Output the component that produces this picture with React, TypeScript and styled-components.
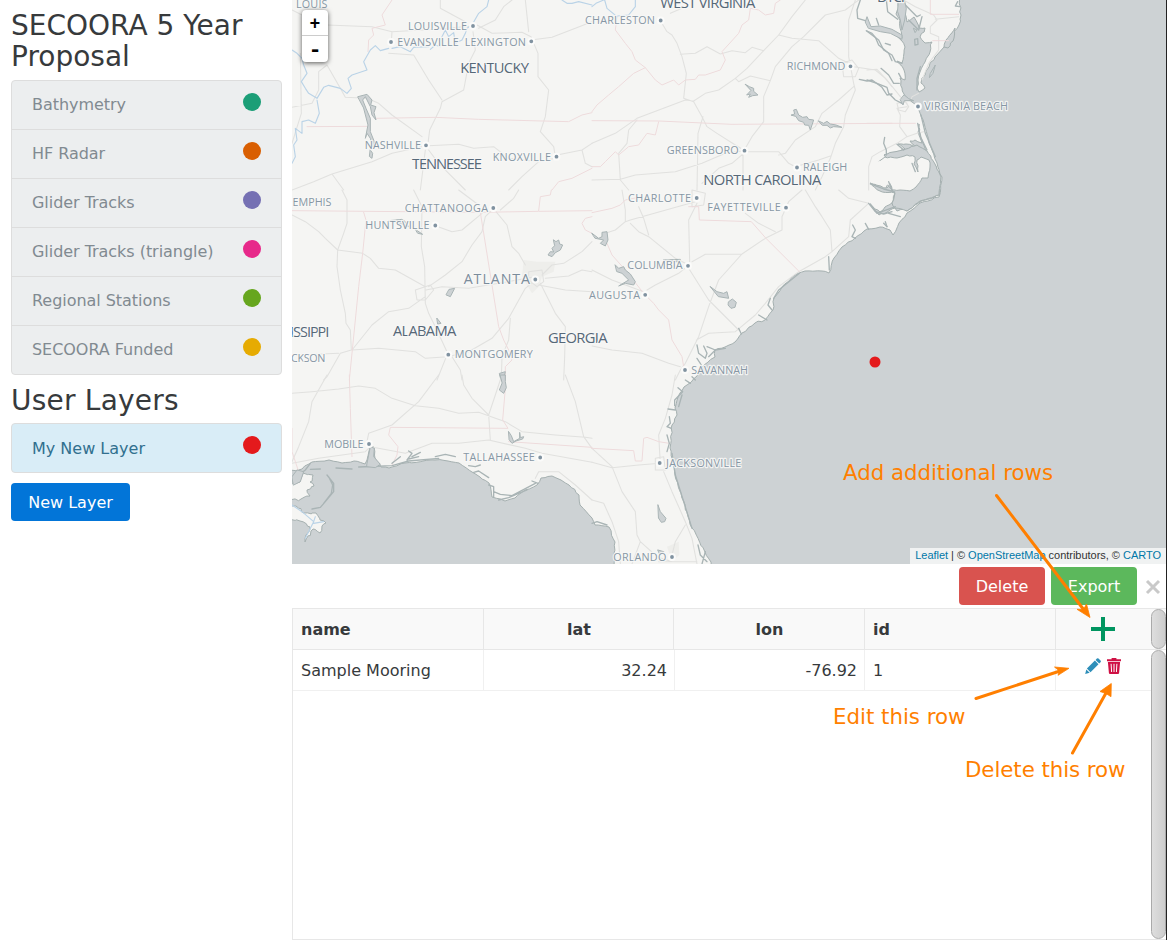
import React from 'react';
import styled, { createGlobalStyle } from 'styled-components';

const GlobalStyle = createGlobalStyle`
  * { box-sizing: border-box; }
  body { margin: 0; background: #fff; color: #373a3c; font: 16px/24px "DejaVu Sans", sans-serif; }
`;

const Page = styled.div`
  position: relative;
  display: flex;
  width: 1167px;
  height: 940px;
  overflow: hidden;
  border-right: 1px solid #222;
`;
const Sidebar = styled.aside`
  width: 292px;
  flex: none;
  padding: 11px 10px 0 11px;
`;
const Heading = styled.h3<{ $gap: number; $tracking?: number }>`
  margin: 0 0 ${(p) => p.$gap}px;
  font-size: 28px;
  font-weight: 400;
  line-height: 30.8px;
  letter-spacing: ${(p) => p.$tracking || 0}px;
`;
const LayerList = styled.ul<{ $gap: number }>`
  list-style: none;
  margin: 0 0 ${(p) => p.$gap}px;
  padding: 0;
`;
const Swatch = styled.span<{ $color: string }>`
  width: 18px;
  height: 18px;
  border-radius: 50%;
  background: ${(p) => p.$color};
`;
const LayerItem = styled.li<{ $active?: boolean }>`
  display: flex;
  justify-content: space-between;
  padding: ${(p) => (p.$active ? '13px 20px 11px' : '12px 20px')};
  margin-bottom: -1px;
  border: 1px solid #ddd;
  background: ${(p) => (p.$active ? '#d9edf7' : '#eceeef')};
  color: ${(p) => (p.$active ? '#31708f' : '#818a91')};
  letter-spacing: ${(p) => (p.$active ? '0' : '-0.04px')};
  &:first-child { border-radius: 4px 4px 0 0; }
  &:last-child { border-radius: 0 0 4px 4px; margin-bottom: 0; }
  &:only-child { border-radius: 4px; }
  ${Swatch} { margin-top: ${(p) => (p.$active ? '-1px' : '0')}; }
`;
const Button = styled.button<{ $color: string; $width: number }>`
  width: ${(p) => p.$width}px;
  height: 38px;
  padding: 1px 0 0;
  border: 0;
  border-radius: 4px;
  background: ${(p) => p.$color};
  color: #fff;
  font: inherit;
`;
const Main = styled.main`
  flex: 1;
  min-width: 0;
  display: flex;
  flex-direction: column;
`;
const MapPane = styled.section`
  position: relative;
  height: 564px;
  flex: none;
  overflow: hidden;
  background: #cdd2d4;
`;
const ZoomControl = styled.div`
  position: absolute;
  left: 10px;
  top: 10px;
  width: 26px;
  border-radius: 4px;
  background: #fff;
  box-shadow: 0 1px 5px rgba(0, 0, 0, 0.65);
`;
const ZoomButton = styled.div`
  height: 26px;
  text-align: center;
  color: #000;
  font: bold 18px/28px "Liberation Mono", monospace;
  & + & { font-size: 22px; line-height: 30px; }
  &:first-child { border-bottom: 1px solid #ccc; }
`;
const Attribution = styled.div`
  position: absolute;
  right: 0;
  bottom: 0;
  height: 16px;
  padding: 0 5px;
  background: rgba(255, 255, 255, 0.7);
  color: #333;
  white-space: nowrap;
  letter-spacing: -0.02px;
  font: 11px/15px "Liberation Sans", Arial, sans-serif;
  span { color: #0078a8; }
`;
const Toolbar = styled.div`
  display: flex;
  justify-content: flex-end;
  align-items: center;
  gap: 6px;
  height: 44px;
  padding: 0 5px 0 0;
`;
const CloseIcon = styled.svg`
  width: 16px;
  height: 16px;
  margin: 2px 0 0 2px;
`;
const Grid = styled.div`
  flex: 1;
  border: 1px solid #e7e7e7;
  border-right: 0;
  display: flex;
  flex-direction: column;
`;
const GridSection = styled.div<{ $head?: boolean }>`
  display: flex;
  height: ${(p) => (p.$head ? '41px' : 'auto')};
  flex: ${(p) => (p.$head ? 'none' : '1')};
  background: ${(p) => (p.$head ? '#f9f9f9' : '#fff')};
  border-bottom: ${(p) => (p.$head ? '1px solid #e7e7e7' : '0')};
`;
const GridRow = styled.div<{ $cols: string; $line?: string }>`
  display: grid;
  flex: 1;
  height: ${(p) => (p.$line ? '41px' : '40px')};
  grid-template-columns: ${(p) => p.$cols};
  border-bottom: ${(p) => (p.$line ? '1px solid ' + p.$line : '0')};
`;
const Cell = styled.div<{ $align?: string; $head?: boolean }>`
  padding: 9px ${(p) => (p.$align ? 7 : 8)}px 7px 8px;
  text-align: ${(p) => p.$align || 'left'};
  font-weight: ${(p) => (p.$head ? 700 : 400)};
  border-right: 1px solid ${(p) => (p.$head ? '#e7e7e7' : '#f0f0f0')};
`;
const ActionCell = styled.div`
  display: flex;
  justify-content: center;
  gap: 6px;
  padding: 8px 1px 0 0;
`;
const Scrollbar = styled.div`
  width: 15px;
  border: 1px solid #aaa;
  border-radius: 8px;
  background: linear-gradient(90deg, #dedede, #cdcdcd);
`;
const Annotations = styled.svg`
  position: absolute;
  left: 0;
  top: 0;
  pointer-events: none;
`;
const MapDrawing = styled.svg`
  display: block;
  .land { fill: #f5f5f3; stroke: #a5b0b0; stroke-width: 1; stroke-linejoin: round; }
  .sound { fill: #cdd2d4; stroke: #a5b0b0; stroke-width: 1; stroke-linejoin: round; }
`;

const layers: [string, string][] = [
  ['Bathymetry', '#1b9e77'],
  ['HF Radar', '#d95f02'],
  ['Glider Tracks', '#7570b3'],
  ['Glider Tracks (triangle)', '#e7298a'],
  ['Regional Stations', '#66a61e'],
  ['SECOORA Funded', '#e6ab02'],
];

/* Breaks every segment into short steps with a small, repeatable offset. */
function rough(points: string, amp = 1, step = 4, close = true): string {
  const pts = points.trim().split(/\s+/).map((p) => p.split(',').map(Number));
  let seed = 7;
  const rnd = () => {
    seed = (seed * 16807) % 2147483647;
    return seed / 2147483647 - 0.5;
  };
  let d = `M${pts[0][0]} ${pts[0][1]}`;
  for (let i = 1; i < pts.length; i++) {
    const [ax, ay] = pts[i - 1];
    const [bx, by] = pts[i];
    const n = Math.max(1, Math.round(Math.hypot(bx - ax, by - ay) / step));
    for (let k = 1; k <= n; k++) {
      const o = k === n ? 0 : amp;
      d += `L${(ax + ((bx - ax) * k) / n + rnd() * 2 * o).toFixed(1)} ${(ay + ((by - ay) * k) / n + rnd() * 2 * o).toFixed(1)}`;
    }
  }
  return d + (close ? 'Z' : '');
}

const mainland =
  '280,-10 896,-10 899,8 896,14 900,20 900,28 902,38 897,36 902,41 905,47 904,53 902,63 897,61 904,70 905,80 900,78 902,88 905,98 912,102 918,106 920,113 924,123 929,143 937,163 942,177 939,197 920,203 907,213 899,223 893,235 890,230 880,227 867,229 855,238 842,247 834,258 829,273 822,271 805,271 792,277 782,287 774,298 773,310 765,320 755,323 742,333 735,342 725,347 715,350 715,357 704,365 697,376 684,387 677,400 675,408 677,415 672,425 670,448 675,475 682,498 692,528 705,552 711,562 713,574 614,574 615,542 609,527 595,525 592,518 580,505 579,495 569,485 561,480 552,476 541,478 537,485 525,490 515,498 505,501 492,497 489,483 480,477 472,472 459,463 448,461 435,460 405,463 389,468 381,467 375,458 374,447 370,447 367,460 365,464 354,461 342,463 329,460 312,462 302,469 280,472';
const delmarva =
  '903,-5 905,13 907,22 914,17 919,28 925,28 920,37 925,43 932,42 930,52 925,62 920,72 918,80 917,88 919,92 925,88 921,83 922,78 929,67 935,57 944,47 950,38 959,25 961,15 960,-5';
const sounds = [
  '884,155 897,157 908,154 915,156 914,165 918,172 917,158 929,157 930,167 928,178 922,178 916,187 910,191 900,190 892,190 889,183 887,188 870,183 880,191 895,193 892,203 885,207 880,212 870,205 879,215 895,208 897,211 904,209 907,211 920,202 939,195 940,180 935,165 932,163 927,152 921,138 919,124 918,132 922,143 915,140 910,141 916,147 906,144 898,144 905,149 893,153',
  '944,47 946,40 955,28 954,38 948,48',
  '884,155 893,152 906,149 917,145 927,151 935,164 941,177 939,195 920,201 907,211 895,208 892,203 895,193 888,186 888,160',
];
/* Land between the Albemarle and Pamlico sounds. */
const peninsula =
  '885,157 897,158 907,155 915,157 914,164 918,172 917,160 921,157 929,160 930,167 928,178 922,178 916,187 910,191 900,190 892,190 889,182 886,188 872,184 874,165';
const louisiana = [
  '280,484 300,482 303,473 313,475 310,482 314,486 307,490 310,496 301,499 280,502',
  '280,502 296,506 304,513 316,513 320,520 326,523 322,526 320,533 313,529 305,542 306,535 310,527 300,521 280,515',
];

interface Tile { x: number; y: number; roads: string; borders: string; rivers?: string; lakes?: string; inlets?: string; urban?: string }
/* Each tile is drawn at three units to the pixel. */
const tiles: Tile[] = [
  {
    x: 292, y: 0,
    roads: 'M105 75L240 80L300 95L430 88L543 78M543 95L550 150L530 190L515 270L450 305L445 325L413 390L408 430M290 160L365 165L410 240L450 300M555 75L600 100L690 97L717 110L738 160L738 230L770 270L760 350L745 395L785 440L790 470M717 120L780 112L850 85L900 65M445 0L445 25L520 65M560 85L610 60L635 20L660 0M700 0L710 95M105 195L145 265L160 292L225 295L260 310L300 345L390 410M390 440L300 460L240 485L120 522L65 545L0 570M120 522L155 570M410 437L500 433L545 445L605 440L650 475L740 485L690 530L650 570M400 450L385 570M410 450L440 490L520 570M0 322L60 310L80 270L80 215L105 195M0 30L30 45M25 160L28 340L0 430M740 485L790 475M795 465L870 450L900 430M870 450L880 490L900 500M300 95L298 125',
    borders: 'M300 0L270 45L280 75L240 85L245 105L230 120L228 155M45 380L225 379M250 355L430 352L560 358L830 365L870 345L900 338M780 570L800 545L840 535L900 505',
    rivers: 'M0 150L15 160L30 175L35 195L45 220L28 245L40 265L50 280L75 295L95 262L110 256L145 265L165 280L178 265L168 235L180 225L225 210L215 185L235 150L250 137L265 152L290 145M75 300L82 340L70 370L50 360L30 365L30 400L10 385L15 420L5 435L10 470L0 490M415 148L430 135L445 140L450 110L460 90L470 110L485 98L490 130L510 120L520 100L525 85L540 75L560 40L585 20L590 0M300 145L325 140L355 155L365 142L410 140M810 0L825 10L840 10L860 5L900 15',
    lakes: 'M198 290L225 283L240 300L236 315L252 320L246 338L252 360L240 345L235 320L220 290L212 300L222 325L235 355L235 395L247 425L250 437L240 440L235 415L225 400L220 415L228 375L215 325ZM235 450L242 460L240 475L233 470Z',
  },
  {
    x: 592, y: 0,
    roads: 'M235 40L270 25M207 65L225 95L240 105L255 130L270 170L283 220L275 295L305 305L330 350L345 380L375 400L430 435L455 450M265 163L310 160L345 140L385 162L420 152L460 158L480 142L515 152M0 430L70 400L135 355L280 300L305 303L340 280L380 270L430 235L465 205L515 152L560 105L600 50L640 0M430 235L440 245L475 228L535 242L550 200L600 140L635 110L700 45L760 30L800 0M560 105L600 115L680 122L740 175L770 190M535 242L515 290L515 365L480 410L457 450M790 0L770 60L770 170L785 250L790 270L760 345L755 380L730 430L715 475L690 530L670 570M785 260L740 300L690 340L670 380L610 420L580 460L560 465M457 455L560 455L590 490L610 500M333 350L318 400L315 570M0 540L85 538L130 525L250 515L330 490L400 460L455 452M135 360L110 390L105 430L80 460L85 540L110 570M453 460L453 570M455 460L420 490L380 505L330 550M785 200L850 210L880 235L900 260M610 500L680 480L715 468M750 190L755 230L790 230L800 205L780 180Z',
    borders: 'M0 335L15 315L50 285L80 260L125 220L160 203L190 240L210 255L245 240L260 255L280 240L310 238L320 225L340 225L385 210L400 180L390 155L440 100L450 75L470 60L475 25L500 30L520 45L545 40L550 10L565 0M160 203L130 180L120 155L100 130L70 90L75 50M0 362L200 363L420 373L900 370M200 365L190 405L165 400L140 435L110 440L80 465L70 455L40 485L25 500L0 500',
    rivers: 'M0 20L12 10L35 0M38 0L45 25L75 50M75 48L110 45L130 20L130 0',
    lakes: 'M460 253L472 260L485 265L485 274L498 285L482 287L470 292L475 282L464 285L476 272ZM598 345L608 342L605 330L613 328L620 345L632 352L645 350L650 358L665 360L660 375L655 390L650 376L638 375L635 367L620 362L612 350ZM680 363L695 370L705 364L715 372L732 375L750 382L725 380L715 384L705 376L692 376Z',
    inlets: 'M825 93L840 100L850 112L860 135L890 160L900 182M802 238L825 243L840 240L870 262L885 285L900 282',
  },
  {
    x: 867, y: 0,
    roads: 'M0 210L30 208L60 240L100 290L120 310M155 280L135 290L130 305M110 0L145 20L200 45L210 60L190 80L190 100L215 110L215 150L185 190L165 240M205 58L275 50M120 320L90 325L100 345L98 380L120 410L90 430L40 455L15 470L5 500L5 570M120 410L150 400L170 395M90 310L115 305L125 320L115 335L95 330Z',
    borders: 'M190 0L190 43L275 43M197 122L245 122M0 370L145 370',
    lakes: 'M-5 65L0 50L12 80L40 78L75 88L105 105L105 118L70 100L40 95L5 85ZM95 0L112 0L118 25L113 60L105 90L100 60L92 35ZM140 85L150 90L145 97ZM190 220L205 195L198 220L188 232ZM112 285L125 296L140 302L112 302L108 315L100 300Z',
    inlets: 'M143 118L152 116L153 133L144 135ZM-20 0L-30 30L-28 55L-5 62M58 0L62 35L92 58M28 55L35 75M-2 92L35 120L50 150L75 165L85 185L105 190M55 130L70 135M42 205L65 225L80 250L97 250M95 220L103 235M0 240L30 250L60 262L65 280L85 300L105 310M53 412L50 430L58 450L58 465M110 10L150 50L160 45M125 60L155 90L165 50M160 200L150 235L150 270M162 345L175 400L205 470M152 370L160 410L180 450M90 433L110 450M10 552L50 567L83 576M10 612L30 640L85 620M50 670L60 680M65 640L100 650M272 5L265 18L278 20M135 490L145 515M65 545L75 570',
  },
  {
    x: 292, y: 190,
    roads: 'M150 0L165 30L165 100L155 130L137 180L135 230L145 300L160 370L162 400L175 420L178 480L145 490L105 560L95 570M0 75L40 95L80 125L100 145L137 180L212 190L235 205L260 235L310 240L400 290M365 0L390 50L388 170L398 230L400 340L410 370L430 410L467 490L435 570M402 300L450 290L530 295L620 280L730 260M410 290L460 255L510 215L540 165L570 125L580 80L600 60M612 65L645 105L660 170L680 190L700 225M625 60L665 25L680 0M500 0L560 45M430 107L480 125L510 120L570 70M400 320L350 355L290 365L240 405L180 480L260 475L370 485L400 505L467 500L530 485L600 445L650 385L700 295L725 275M745 280L790 370L820 410L818 500L815 570M740 285L820 300L900 305M750 255L780 225L815 220L870 185L900 155M760 265L830 258L870 240L900 245M480 500L505 540L510 570M655 385L650 450L630 500L628 570M20 495L140 490M370 300L415 285L425 300L400 330L375 330ZM710 245L750 240L755 275L735 290L710 270Z',
    borders: 'M0 62L565 67L740 64L900 62M215 67L222 90L212 190L200 290L172 570M565 67L620 410L635 450L650 480L660 510L640 530L640 570M740 62L745 20L775 15L778 0M900 80L880 85L870 100L880 120L900 130',
    lakes: 'M785 150L792 155L800 150L803 162L812 165L805 180L790 188L780 200L768 195L775 185L785 186L780 175L787 168ZM472 298L488 295L475 320L463 315ZM290 92L330 88L340 95L350 110L320 98ZM370 118L392 133L378 130ZM435 385L447 400L438 402ZM623 550L640 545L635 570L628 570Z',
    urban: 'M695 210L735 215L790 215L785 245L750 260L740 290L720 310L705 285L690 260Z',
  },
  {
    x: 592, y: 190,
    roads: 'M40 130L70 120L100 95L115 90L310 35M90 0L100 60L100 95M115 100L140 125L170 140L250 205L280 220M140 50L155 85L170 135M315 40L290 90L293 215M300 215L340 193L450 192L520 145L570 120L570 80L590 35L630 0M460 70L500 100L550 125M450 192L380 270L350 350L320 440L280 520L265 540M290 235L350 330L440 420M165 300L190 285L260 250L285 230M0 240L60 270L155 305M0 468L60 480L150 490L230 520L265 530M313 450L350 430L430 425L490 375L520 340L560 290L620 245L700 200L720 185L715 120L690 80L670 50L640 0M720 185L770 140L775 90L830 40L770 25L740 0M265 540L250 570M300 0L340 10L335 45L300 50Z',
    borders: 'M0 68L60 55L85 45L100 30L150 20M290 50L320 50L322 90L478 95L522 145L622 245M45 160L60 195L100 240L155 310L185 340L200 360L230 390L240 450L270 500L275 530',
    lakes: 'M0 130L20 145L30 140L30 127L45 125L48 150L40 168L25 160L35 150L10 145ZM70 225L80 235L95 230L100 240L115 252L130 275L125 285L100 280L80 288L110 270L90 250L75 245ZM355 290L375 305L395 310L405 305L410 325L380 320ZM410 335L421 327L433 337L429 352L417 355L409 346ZM215 210L265 208L262 216L240 214Z',
    inlets: 'M830 40L850 65L875 72L900 65M782 105L790 120L780 140L790 145M820 100L830 118M880 95L885 110M710 200L712 240M622 250L560 300L545 325M535 325L528 345L540 360M500 375L525 390M440 415L448 432M335 468L345 490L340 505L320 490L315 465M345 470L370 480L350 500M328 525L315 505M370 480L400 475M300 560L310 570',
  },
  {
    x: 292, y: 375,
    roads: 'M0 55L60 50L140 42L200 33L250 40L300 70L370 92L440 100L500 115L560 112L640 140L690 170L790 180L880 187L900 190M105 0L60 80L50 140L20 215L0 260M440 0L380 80L300 150L230 175L225 200M510 0L515 30L540 70L590 120L595 195M630 0L610 60L590 120M820 0L850 80L875 185L900 220M0 265L80 250L150 240L220 230L235 215L340 235L420 205L500 205L590 195L700 220L750 235L900 262M730 310L740 290L800 290L850 330L900 375',
    borders: 'M172 0L175 100L180 245M640 40L632 135L648 160L295 157L290 180L318 215L315 240L300 270M650 200L900 217M0 160L0 230L20 290',
    rivers: 'M0 390L30 410L65 440L70 425M65 440L40 490M65 445L95 440',
    lakes: 'M650 170L658 182L665 200L683 190L683 172L685 188L695 185L692 192L672 198L660 205L652 195ZM625 0L640 0L640 20L643 38L635 55L622 45L630 25ZM225 265L235 215L247 220L245 245L265 268L250 278L225 275ZM0 305L15 285L35 290L25 320L5 330Z',
    inlets: 'M105 300L125 325L125 350L100 380L85 397L60 402M110 305L122 330L118 355L95 385M55 283L85 282M132 279L180 282M300 265L325 245M345 255L360 235L350 228M360 245L385 232M350 252L380 245M430 245L460 238L490 245M530 272L550 275L565 270M545 292L560 288L590 308M605 350L625 358L660 362L730 325M590 330L605 335L605 365M720 318L738 325M20 300L40 285L55 265M200 276L300 272L350 258L440 250M620 375L650 368L705 345',
  },
  {
    x: 592, y: 375,
    roads: 'M250 0L240 60L220 130L200 180L205 265M0 262L60 278L140 270L205 265M0 220L60 275L90 350L130 410L135 480L145 500L195 545L240 560M145 500L120 567M0 375L35 385L60 440L80 500L85 567M215 290L240 350L280 440L300 490L315 567M280 450L250 500L240 540M200 560L315 560M190 250L215 245L220 285L190 285Z',
    borders: 'M0 220L125 227L130 258L150 258L155 190L165 187L200 200L232 205',
    lakes: 'M198 390L205 410L222 430L218 440L208 442L200 430ZM198 525L215 530L205 540Z',
    inlets: 'M280 15L295 25M258 38L272 50L248 75L248 92M270 60L260 95M228 102L250 105M232 125L235 145L225 155L238 160M225 180L232 205L225 230M240 235L250 300L300 460M318 510L325 540L345 560M340 530L330 567M0 445L15 440L45 450',
    urban: 'M225 515L260 500L262 540L240 560Z',
  },
];

type Kind = 'city' | 'state' | 'metro';
const labels: [string, number, number, number, Kind][] = [
  ['LOUIS', 296, 327.5, 8, 'city'],
  ['LOUISVILLE', 408, 467, 30, 'city'],
  ['EVANSVILLE', 397.3, 458.7, 46, 'city'],
  ['LEXINGTON', 464.7, 526, 45.5, 'city'],
  ['KENTUCKY', 460.3, 529, 73.3, 'state'],
  ['NASHVILLE', 364.7, 421, 149.3, 'city'],
  ['TENNESSEE', 412, 482, 168.7, 'state'],
  ['KNOXVILLE', 492.7, 551, 160.7, 'city'],
  ['CHARLESTON', 585, 655, 24, 'city'],
  ['WEST VIRGINIA', 660.3, 755.3, 8, 'state'],
  ['RICHMOND', 786.7, 845.3, 70, 'city'],
  ['GREENSBORO', 666.7, 738.7, 154.3, 'city'],
  ['RALEIGH', 803, 847.3, 171.3, 'city'],
  ['NORTH CAROLINA', 703.3, 821.3, 185.3, 'state'],
  ['VIRGINIA BEACH', 924.3, 1008, 110.3, 'city'],
  ['DYCI', 877, 905, 1.5, 'state'],
  ['EMPHIS', 292.5, 331.5, 206, 'city'],
  ['CHATTANOOGA', 404.7, 488, 212, 'city'],
  ['HUNTSVILLE', 365.3, 429.5, 229.3, 'city'],
  ['ATLANTA', 463.7, 530, 284.2, 'metro'],
  ['ALABAMA', 393, 456.3, 336, 'state'],
  ['ISSIPPI', 290, 329.5, 337.3, 'state'],
  ['CKSON', 291, 325.3, 361.7, 'city'],
  ['MONTGOMERY', 454.7, 532.7, 358, 'city'],
  ['GEORGIA', 548, 607.5, 343.3, 'state'],
  ['CHARLOTTE', 628, 691, 201.7, 'city'],
  ['FAYETTEVILLE', 707.3, 780.7, 211.3, 'city'],
  ['COLUMBIA', 627.3, 682.7, 269.3, 'city'],
  ['AUGUSTA', 589, 640, 298.5, 'city'],
  ['SAVANNAH', 691.3, 748, 373.5, 'city'],
  ['MOBILE', 324.3, 363.5, 447.7, 'city'],
  ['TALLAHASSEE', 463.3, 534.7, 461.3, 'city'],
  ['JACKSONVILLE', 666, 741.3, 466.7, 'city'],
  ['ORLANDO', 613.3, 666.3, 560.7, 'city'],
];
const towns = [
  [473, 26], [391, 42], [531.3, 41.3], [426, 145.3], [556.5, 156.7], [660.7, 20.5], [850.5, 66.3],
  [744.5, 150.7], [797, 167.5], [918, 106.5], [493.3, 208], [435.3, 225.5], [535.3, 279.5], [448.3, 354.7],
  [696.7, 198], [786, 207.7], [688, 265.8], [645.2, 294.8], [685, 370], [369, 444], [540.2, 457.5],
  [659.7, 463], [672, 557],
];
const labelStyle = {
  city: { size: 10.8, fill: '#8797a5', weight: 500 },
  state: { size: 14.8, fill: '#566878', weight: 500 },
  metro: { size: 14.2, fill: '#7b8c9b', weight: 400 },
};

function BaseMap() {
  return (
    <MapDrawing width="874" height="564" viewBox="292 0 874 564">
      <path className="land" d={rough(mainland, 0.8)} />
      <path className="land" d={rough(delmarva, 1.1)} />
      {louisiana.map((p) => <path key={p} className="land" d={rough(p, 1.5, 3)} />)}
      {sounds.map((p) => <path key={p} className="sound" d={rough(p, 0.7, 3)} />)}
      <path className="land" d={rough(peninsula, 0.7, 3)} />
      <path d="M871 162L890 160V185L871 183Z" fill="#f5f5f3" />
      {tiles.map((t) => (
        <g key={`${t.x}-${t.y}`} transform={`translate(${t.x} ${t.y}) scale(0.33333)`} fill="none" strokeLinejoin="round" strokeLinecap="round">
          {t.urban && <path d={t.urban} fill="#eeeeeb" />}
          <path d={t.roads} stroke="#e1e1df" strokeWidth="3.2" />
          <path d={t.borders} stroke="#eedbdc" strokeWidth="3" />
          {t.rivers && <path d={t.rivers} stroke="#bad3e7" strokeWidth="3.4" />}
          {t.inlets && <path d={t.inlets} stroke="#a9b4b5" strokeWidth="4" />}
          {t.lakes && <path d={t.lakes} stroke="#a9b4b5" strokeWidth="3" fill="#cdd2d4" />}
        </g>
      ))}
      {towns.map(([x, y]) => (
        <circle key={`${x}-${y}`} cx={x} cy={y} r="2.9" fill="#8092a0" stroke="#fbfbfa" strokeWidth="2" />
      ))}
      <g fontFamily='"Open Sans", Lato, sans-serif' paintOrder="stroke" stroke="#f8f8f7" strokeOpacity="0.85" strokeWidth="2.4" strokeLinejoin="round">
        {labels.map(([text, x0, x1, y, kind]) => (
          <text key={text} x={x0} y={y} textLength={x1 - x0} fontSize={labelStyle[kind].size} fontWeight={labelStyle[kind].weight} fill={labelStyle[kind].fill}>
            {text}
          </text>
        ))}
      </g>
      <circle cx="875" cy="362" r="5.5" fill="#e41a1c" />
    </MapDrawing>
  );
}

const PlusIcon = () => (
  <svg width="24" height="24" viewBox="0 0 24 24"><path d="M10 0h4v10h10v4H14v10h-4V14H0v-4h10z" fill="#009560" /></svg>
);
const PencilIcon = () => (
  <svg width="16" height="16" viewBox="0 0 16 16">
    <path d="M11.9.6q.8-.8 1.6 0l2 2q.8.8 0 1.6l-1.3 1.3-3.6-3.6zM9.9 2.6l3.6 3.6-8 8L1.9 10.6zM1.3 11.4l3.4 3.4L.2 15.9z" fill="#2d8eb9" />
  </svg>
);
const TrashIcon = () => (
  <svg width="14" height="16" viewBox="0 0 14 16">
    <path d="M4.6 0h4.8v1.3H14v2H0v-2h4.6zM.9 4.1h12.2L12.1 15q-.1 1-1.1 1H3q-1 0-1.1-1z" fill="#cf1044" />
    <path d="M4.1 5.8l.5 8.2M7 5.8v8.2M9.9 5.8l-.5 8.2" stroke="#fff" strokeWidth="1" />
  </svg>
);

export default function App() {
  return (
    <>
      <GlobalStyle />
      <Page>
        <Sidebar>
          <Heading $gap={7.4}>SECOORA 5 Year Proposal</Heading>
          <LayerList $gap={11}>
            {layers.map(([name, color]) => (
              <LayerItem key={name}>{name}<Swatch $color={color} /></LayerItem>
            ))}
          </LayerList>
          <Heading $gap={6.6} $tracking={0.22}>User Layers</Heading>
          <LayerList $gap={10}>
            <LayerItem $active>My New Layer<Swatch $color="#e41a1c" /></LayerItem>
          </LayerList>
          <Button $color="#0275d8" $width={119}>New Layer</Button>
        </Sidebar>
        <Main>
          <MapPane>
            <BaseMap />
            <ZoomControl>
              <ZoomButton>+</ZoomButton>
              <ZoomButton>-</ZoomButton>
            </ZoomControl>
            <Attribution>
              <span>Leaflet</span> | © <span>OpenStreetMap</span> contributors, © <span>CARTO</span>
            </Attribution>
          </MapPane>
          <Toolbar>
            <Button $color="#d9534f" $width={86}>Delete</Button>
            <Button $color="#5cb85c" $width={86}>Export</Button>
            <CloseIcon viewBox="0 0 16 16"><path d="M2 2l12 12M14 2L2 14" stroke="#c9c9c9" strokeWidth="3" /></CloseIcon>
          </Toolbar>
          <Grid>
            <GridSection $head>
              <GridRow $cols="191px 190px 191px 191px 1fr">
                <Cell $head>name</Cell>
                <Cell $head $align="center">lat</Cell>
                <Cell $head $align="center">lon</Cell>
                <Cell $head>id</Cell>
                <ActionCell><PlusIcon /></ActionCell>
              </GridRow>
              <Scrollbar />
            </GridSection>
            <GridSection>
              <GridRow $cols="191px 191px 190px 191px 1fr" $line="#f0f0f0">
                <Cell>Sample Mooring</Cell>
                <Cell $align="right">32.24</Cell>
                <Cell $align="right">-76.92</Cell>
                <Cell>1</Cell>
                <ActionCell><PencilIcon /><TrashIcon /></ActionCell>
              </GridRow>
              <Scrollbar />
            </GridSection>
          </Grid>
        </Main>
        <Annotations width="1167" height="940" viewBox="0 0 1167 940" fill="#ff7f00" fontFamily='"DejaVu Sans", sans-serif' fontSize="21.33">
          <text x="843" y="480" textLength="210">Add additional rows</text>
          <text x="833" y="724" textLength="132.5">Edit this row</text>
          <text x="965" y="777" textLength="160.5">Delete this row</text>
          <path d="M996.5 495.5L1084 610M976 698.5L1060 671M1072.5 753L1106 693" stroke="#ff7f00" strokeWidth="3" strokeLinecap="round" />
          <path d="M1090 617.5L1077 609.3L1083.5 609.5L1086.5 604ZM1069 668.3L1058 675.3L1059.5 671L1054.5 667ZM1111.3 683.5L1111 696.7L1106 693.5L1100 691.5Z" stroke="#ff7f00" strokeWidth="0.8" />
        </Annotations>
      </Page>
    </>
  );
}
